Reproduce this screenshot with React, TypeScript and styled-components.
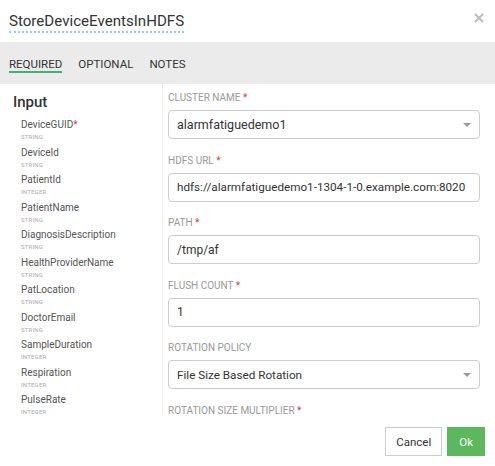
import React from "react";
import styled, { createGlobalStyle } from "styled-components";

const GlobalStyle = createGlobalStyle`
  html, body {
    margin: 0;
    padding: 0;
    background: #ffffff;
  }
  body {
    font-family: Roboto, "Liberation Sans", Arial, sans-serif;
    color: #333;
  }
`;

const Modal = styled.div`
  width: 495px;
  height: 466px;
  display: flex;
  flex-direction: column;
  background: #fff;
  overflow: hidden;
`;

const Header = styled.div`
  height: 42px;
  display: flex;
  align-items: center;
  justify-content: space-between;
  padding: 0 10px 0 9px;
  box-sizing: border-box;
`;

const Title = styled.h4`
  margin: 0;
  font-size: 15.1px;
  font-weight: 400;
  color: #333;
  line-height: 19px;
  border-bottom: 2px dotted #8fcdea;
  margin-top: 2px;
`;

const Close = styled.button`
  border: none;
  background: none;
  padding: 0;
  width: 12px;
  height: 12px;
  display: flex;
  align-items: center;
  justify-content: center;
  cursor: pointer;
  margin-top: -6px;
`;

const TabBar = styled.div`
  height: 42px;
  background: #ebebeb;
  display: flex;
  align-items: stretch;
  padding-left: 9px;
  gap: 16px;
`;

const Tab = styled.div<{ $active?: boolean }>`
  display: flex;
  align-items: center;
  font-size: 11.5px;
  color: #333;
  position: relative;
  padding-top: 1px;

  &::after {
    content: "";
    display: ${(p) => (p.$active ? "block" : "none")};
    position: absolute;
    left: 0;
    right: 0;
    bottom: 11px;
    height: 2px;
    background: #3cb371;
  }
`;

const Body = styled.div`
  height: 331px;
  display: flex;
  overflow: hidden;
`;

const Side = styled.div`
  width: 163px;
  border-right: 1px solid #eeeeee;
  box-sizing: border-box;
  padding: 8px 0 0 13px;
`;

const SideTitle = styled.div`
  font-size: 15px;
  font-weight: 500;
  color: #333;
  line-height: 20px;
  margin-bottom: 5px;
`;

const Field = styled.div`
  padding-left: 8px;
  padding-bottom: 3.5px;
`;

const FieldName = styled.div`
  font-size: 10px;
  line-height: 15px;
  color: #555;
`;

const Req = styled.span`
  color: #e53935;
`;

const FieldType = styled.div`
  font-size: 6px;
  line-height: 9px;
  color: #aaa;
  text-transform: uppercase;
  letter-spacing: 0.2px;
`;

const Form = styled.div`
  flex: 1;
  padding: 7px 15px 0 5px;
  overflow: hidden;
`;

const Group = styled.div`
  margin-bottom: 14.5px;
`;

const Label = styled.div`
  font-size: 10px;
  line-height: 14px;
  color: #999;
  text-transform: uppercase;
  margin-bottom: 5px;
  white-space: nowrap;
`;

const Control = styled.div<{ $size: number }>`
  height: 29px;
  border: 1px solid #ccc;
  border-radius: 4px;
  box-sizing: border-box;
  display: flex;
  align-items: center;
  justify-content: space-between;
  padding: 0 8px 0 8px;
  font-size: ${(p) => p.$size}px;
  color: #333;
  background: #fff;
  white-space: nowrap;
  overflow: hidden;
`;

const Caret = styled.span`
  width: 0;
  height: 0;
  border-left: 4px solid transparent;
  border-right: 4px solid transparent;
  border-top: 4px solid #999;
`;

const Footer = styled.div`
  flex: 1;
  display: flex;
  justify-content: flex-end;
  align-items: flex-start;
  padding: 12px 10px 0 0;
  gap: 5px;
`;

const Button = styled.button<{ $primary?: boolean }>`
  height: 29px;
  padding: 0 ${(p) => (p.$primary ? "11px" : "10px")};
  border: 1px solid ${(p) => (p.$primary ? "#5cb85c" : "#ccc")};
  background: ${(p) => (p.$primary ? "#5cb85c" : "#fff")};
  color: ${(p) => (p.$primary ? "#fff" : "#333")};
  font-family: inherit;
  font-size: 11.5px;
  border-radius: 0;
  cursor: pointer;
`;

const fields: { name: string; type: string; required?: boolean }[] = [
  { name: "DeviceGUID", type: "string", required: true },
  { name: "DeviceId", type: "string" },
  { name: "PatientId", type: "integer" },
  { name: "PatientName", type: "string" },
  { name: "DiagnosisDescription", type: "string" },
  { name: "HealthProviderName", type: "string" },
  { name: "PatLocation", type: "string" },
  { name: "DoctorEmail", type: "string" },
  { name: "SampleDuration", type: "integer" },
  { name: "Respiration", type: "integer" },
  { name: "PulseRate", type: "integer" },
];

const config: {
  label: string;
  value: string;
  required?: boolean;
  select?: boolean;
  size?: number;
}[] = [
  { label: "Cluster Name", value: "alarmfatiguedemo1", required: true, select: true, size: 12.5 },
  { label: "HDFS URL", value: "hdfs://alarmfatiguedemo1-1304-1-0.example.com:8020", required: true, size: 11.7 },
  { label: "Path", value: "/tmp/af", required: true, size: 12 },
  { label: "Flush Count", value: "1", required: true, size: 12 },
  { label: "Rotation Policy", value: "File Size Based Rotation", select: true, size: 11.7 },
  { label: "Rotation Size Multiplier", value: "", required: true },
];

export default function App() {
  return (
    <Modal>
      <GlobalStyle />
      <Header>
        <Title>StoreDeviceEventsInHDFS</Title>
        <Close aria-label="close">
          <svg width="10" height="10" viewBox="0 0 10 10">
            <path d="M1 1L9 9M9 1L1 9" stroke="#bbb" strokeWidth="2" />
          </svg>
        </Close>
      </Header>
      <TabBar>
        <Tab $active>REQUIRED</Tab>
        <Tab>OPTIONAL</Tab>
        <Tab>NOTES</Tab>
      </TabBar>
      <Body>
        <Side>
          <SideTitle>Input</SideTitle>
          {fields.map((f) => (
            <Field key={f.name}>
              <FieldName>
                {f.name}
                {f.required && <Req>*</Req>}
              </FieldName>
              <FieldType>{f.type}</FieldType>
            </Field>
          ))}
        </Side>
        <Form>
          {config.map((c) => (
            <Group key={c.label}>
              <Label>
                {c.label}
                {c.required && <Req> *</Req>}
              </Label>
              {c.value !== "" && (
                <Control $size={c.size ?? 12}>
                  <span>{c.value}</span>
                  {c.select && <Caret />}
                </Control>
              )}
            </Group>
          ))}
        </Form>
      </Body>
      <Footer>
        <Button>Cancel</Button>
        <Button $primary>Ok</Button>
      </Footer>
    </Modal>
  );
}
